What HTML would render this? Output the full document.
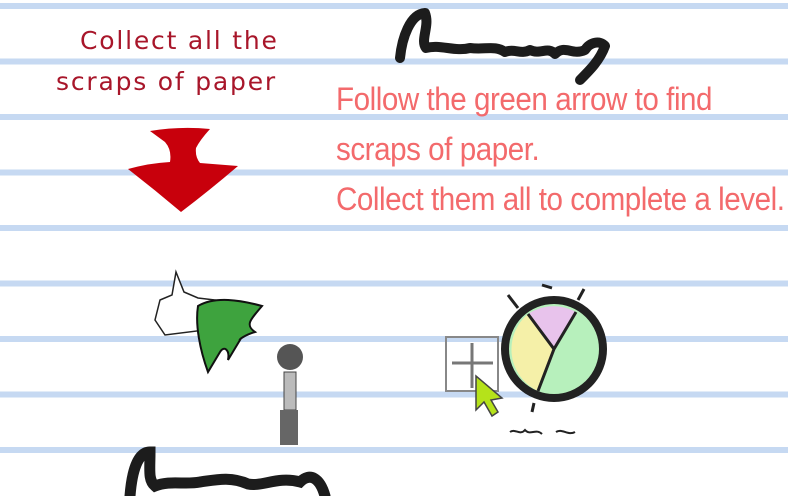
<!DOCTYPE html>
<html><head><meta charset="utf-8"><style>
html,body{margin:0;padding:0}
body{width:788px;height:496px;overflow:hidden;background:#fff;position:relative;
background-image:repeating-linear-gradient(to bottom,transparent 0,transparent 3px,#c6d9f2 3px,#c6d9f2 9px,transparent 9px,transparent 55.5px)}
.t{position:absolute;left:336px;color:#f36a6c;font-family:"Liberation Sans",sans-serif;font-size:32px;line-height:50px;white-space:nowrap;letter-spacing:-0.5px;transform:scaleX(0.925);transform-origin:0 0}
.h{position:absolute;color:#a8162a;font-family:"DejaVu Sans","Liberation Sans",sans-serif;font-size:25px;letter-spacing:1.8px;white-space:nowrap}
svg{position:absolute;left:0;top:0}
</style></head><body>
<div class="h" style="left:80px;top:26px">Collect all the</div>
<div class="h" style="left:56px;top:67px">scraps of paper</div>
<div class="t" style="top:74px">Follow the green arrow to find<br>scraps of paper.<br>Collect them all to complete a level.</div>
<svg width="788" height="496" viewBox="0 0 788 496">
<path d="M150 131 Q180 126 210 129 Q200 140 196 148 Q195 157 200 163 L238 166 Q210 190 181 212 Q155 190 128 169 Q150 163 170 162 Q172 150 165 142 Z" fill="#c8000c"/>
<path d="M400 58 C402 38 410 14 425 13 C430 26 420 40 426 48 C440 44 455 52 470 48 C485 50 495 45 505 52 C515 48 520 55 530 50 C540 55 548 46 555 54 C565 44 572 56 585 50 C590 42 600 40 605 46 C600 60 590 70 580 80" fill="none" stroke="#1c1c1c" stroke-width="10" stroke-linecap="round" stroke-linejoin="round"/>
<path d="M130 496 C132 470 138 452 150 452 C150 470 148 480 155 486 C170 480 185 485 200 482 C215 480 230 476 248 484 C262 487 278 476 300 482 C310 472 320 478 325 496" fill="none" stroke="#1c1c1c" stroke-width="11" stroke-linecap="round"/>
<path d="M160 300 L172 295 L176 272 L184 292 L198 298 L215 300 L205 330 L165 335 L155 320 Z" fill="#fff" stroke="#222" stroke-width="1.5"/>
<path d="M198 306 C215 296 240 300 262 306 C250 320 245 325 255 332 C245 335 238 340 240 340 L228 360 C230 350 224 345 220 352 L208 372 C200 350 195 325 198 306 Z" fill="#3ea33e" stroke="#111" stroke-width="2"/>
<circle cx="290" cy="357" r="13" fill="#555"/>
<rect x="284" y="372" width="12" height="38" fill="#bbb" stroke="#444" stroke-width="1"/>
<rect x="280" y="410" width="18" height="35" fill="#666"/>
<rect x="446" y="337" width="52" height="54" fill="none" stroke="#888" stroke-width="2"/>
<path d="M452 363 H493 M472 343 V388" stroke="#777" stroke-width="3"/>
<circle cx="554" cy="349" r="49" fill="#b7f0bc" stroke="#222" stroke-width="8"/>
<path d="M554 349 L528 314 A46 46 0 0 1 576 312 Z" fill="#e8c3ec"/>
<path d="M554 349 L528 314 A46 46 0 0 0 538 391 Z" fill="#f5f0a8"/>
<path d="M528 314 L554 349 L576 312 M554 349 L538 391" stroke="#222" stroke-width="3" fill="none"/>
<path d="M508 295 L518 308 M584 289 L578 300 M542 285 L552 288 M534 403 L532 412" stroke="#222" stroke-width="3"/>
<path d="M476 376 L476 410 L484 402 L492 416 L498 412 L491 400 L502 398 Z" fill="#b5e21a" stroke="#444" stroke-width="1.5"/>
<path d="M510 432 C515 428 520 436 525 430 C530 436 536 428 542 434 M556 432 C562 428 568 436 575 432" stroke="#222" stroke-width="2" fill="none"/>
</svg>
</body></html>
